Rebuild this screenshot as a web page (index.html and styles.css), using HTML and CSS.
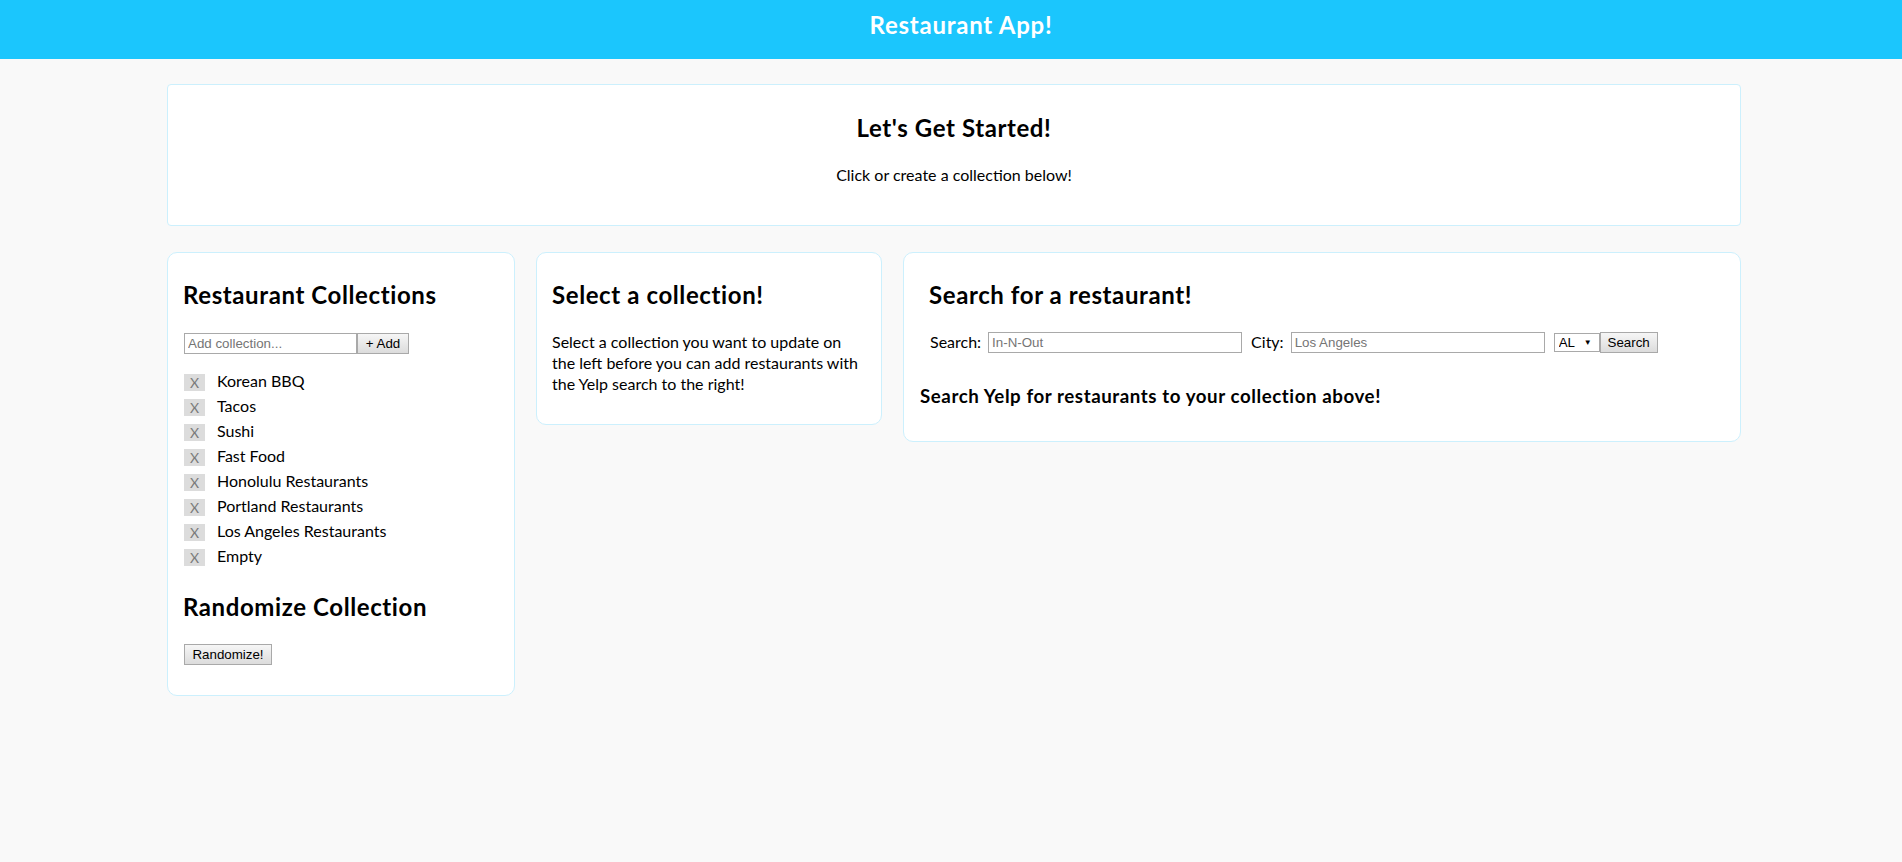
FILE: index.html
```html
<!DOCTYPE html>
<html lang="en">
<head>
<meta charset="utf-8">
<title>Restaurant App!</title>
<link rel="stylesheet" href="styles.css">
</head>
<body>
<header class="topbar"><h1 class="brand">Restaurant App!</h1></header>
<main class="page">
  <section class="card intro">
    <h2 class="intro-title">Let's Get Started!</h2>
    <p class="intro-text">Click or create a collection below!</p>
  </section>
  <div class="columns">
    <section class="card panel">
      <h2 class="panel-title">Restaurant Collections</h2>
      <form class="add-form"><input class="text-input add-input" type="text" placeholder="Add collection..."><button class="btn add-btn" type="button">+ Add</button></form>
      <ul class="collections">
        <li class="collection"><span class="remove">X</span><span class="collection-name">Korean BBQ</span></li>
        <li class="collection"><span class="remove">X</span><span class="collection-name">Tacos</span></li>
        <li class="collection"><span class="remove">X</span><span class="collection-name">Sushi</span></li>
        <li class="collection"><span class="remove">X</span><span class="collection-name">Fast Food</span></li>
        <li class="collection"><span class="remove">X</span><span class="collection-name">Honolulu Restaurants</span></li>
        <li class="collection"><span class="remove">X</span><span class="collection-name">Portland Restaurants</span></li>
        <li class="collection"><span class="remove">X</span><span class="collection-name">Los Angeles Restaurants</span></li>
        <li class="collection"><span class="remove">X</span><span class="collection-name">Empty</span></li>
      </ul>
      <h2 class="panel-title random-title">Randomize Collection</h2>
      <button class="btn random-btn" type="button">Randomize!</button>
    </section>
    <section class="card panel">
      <h2 class="panel-title">Select a collection!</h2>
      <p class="body-text">Select a collection you want to update on the left before you can add restaurants with the Yelp search to the right!</p>
    </section>
    <section class="card panel search-panel">
      <div class="search-head">
        <h2 class="panel-title">Search for a restaurant!</h2>
        <form class="search-form">
          <label class="field-label">Search:</label>
          <input class="text-input search-input" type="text" placeholder="In-N-Out">
          <label class="field-label">City:</label>
          <input class="text-input search-input" type="text" placeholder="Los Angeles">
          <span class="select-wrap">
            <select class="state-select"><option>AL</option></select>
            <span class="select-arrow">&#9660;</span>
          </span>
          <button class="btn search-btn" type="button">Search</button>
        </form>
      </div>
      <h3 class="results-title">Search Yelp for restaurants to your collection above!</h3>
    </section>
  </div>
</main>
</body>
</html>
```
FILE: styles.css
```css
* { box-sizing: border-box; }
html, body { margin: 0; }
body {
  background: #f9f9f9;
  font-family: Lato, "Open Sans", sans-serif;
  color: #000;
}
.topbar {
  height: 59px;
  background: #1bc6fd;
  padding: 10px 0 0 20px;
  text-align: center;
}
.brand {
  margin: 0;
  font-size: 24px;
  line-height: 30px;
  font-weight: 700;
  letter-spacing: 0.75px;
  color: #fff;
}
.page {
  width: 1574px;
  margin: 25px 0 0 167px;
}
.card {
  background: #fff;
  border: 1px solid #ccf0fd;
}
.intro {
  height: 142px;
  border-radius: 4px;
  padding-top: 28px;
  text-align: center;
}
.intro-title {
  margin: 0;
  font-size: 24px;
  line-height: 30px;
  font-weight: 700;
  letter-spacing: 0.6px;
}
.intro-text {
  margin: 21px 0 0;
  font-size: 16px;
  line-height: 22px;
}
.columns {
  display: grid;
  grid-template-columns: 348px 346px 1fr;
  column-gap: 21px;
  align-items: start;
  margin-top: 26px;
}
.panel {
  border-radius: 10px;
  padding: 27px 16px 30px;
}
.panel-title {
  margin: 0 0 0 -1px;
  font-size: 24px;
  line-height: 30px;
  font-weight: 700;
  letter-spacing: 0.6px;
}
.add-form {
  display: flex;
  margin: 23px 0 0;
}
.text-input {
  height: 21px;
  margin: 0;
  border: 1px solid #a9a9a9;
  padding: 0 3px;
  background: #fff;
  color: #000;
  font: 13.33px "Liberation Sans", Arial, sans-serif;
  outline: none;
}
.text-input::placeholder { color: #757575; }
.add-input { width: 173px; }
.btn {
  height: 21px;
  margin: 0;
  padding: 0 6px;
  border: 1px solid #a9a9a9;
  border-radius: 0;
  background: linear-gradient(#f6f6f6, #dcdcdc);
  color: #000;
  font: 13.33px "Liberation Sans", Arial, sans-serif;
}
.add-btn { width: 52px; }
.collections {
  list-style: none;
  margin: 16px 0 0;
  padding: 0;
}
.collection {
  display: flex;
  align-items: center;
  height: 25px;
  font-size: 16px;
}
.collection-name {
  line-height: 20px;
  padding-bottom: 3px;
}
.remove {
  width: 21px;
  height: 17px;
  margin-right: 12px;
  background: #dcdcdc;
  color: #7a7a7a;
  font-size: 14px;
  line-height: 17px;
  text-align: center;
}
.random-title { margin-top: 22px; }
.random-btn {
  margin-top: 22px;
  width: 88px;
}
.body-text {
  margin: 21px 0 0 -1px;
  font-size: 16px;
  line-height: 21px;
}
.search-panel { padding-bottom: 33px; }
.search-head { padding-left: 10px; }
.search-form {
  display: flex;
  align-items: center;
  height: 21px;
  margin-top: 22px;
  font-size: 16px;
}
.field-label {
  margin-right: 7px;
  padding-bottom: 3px;
}
.search-input {
  width: 254px;
  margin-right: 9px;
}
.select-wrap {
  position: relative;
  width: 46px;
  height: 19px;
}
.state-select {
  appearance: none;
  -webkit-appearance: none;
  display: block;
  width: 46px;
  height: 19px;
  margin: 0;
  padding: 0 0 0 4px;
  border: 1px solid #a9a9a9;
  border-radius: 0;
  background: #fff;
  color: #000;
  font: 13.33px "Liberation Sans", Arial, sans-serif;
}
.select-arrow {
  position: absolute;
  right: 8px;
  top: 4px;
  font-size: 8px;
  line-height: 10px;
  color: #000;
  pointer-events: none;
}
.search-btn { width: 58px; }
.results-title {
  margin: 31px 0 0;
  font-size: 18.72px;
  line-height: 24px;
  font-weight: 700;
  letter-spacing: 0.57px;
}
```
